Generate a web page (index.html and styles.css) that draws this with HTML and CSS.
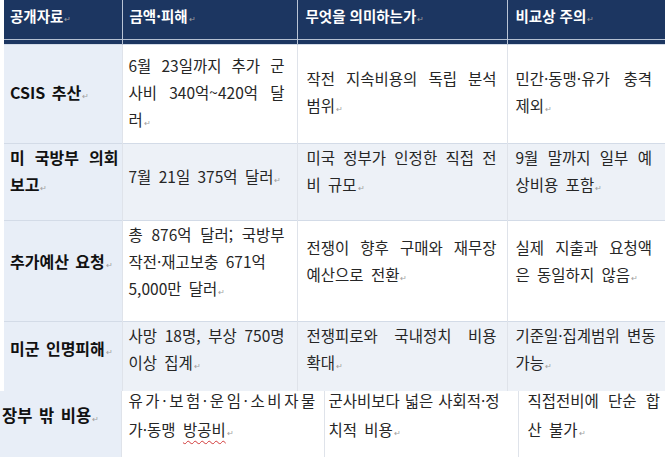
FILE: index.html
```html
<!DOCTYPE html>
<html lang="ko">
<head>
<meta charset="utf-8">
<link rel="stylesheet" href="styles.css">
</head>
<body>
<div class="page">
  <table class="grid main">
    <colgroup><col class="w1"><col class="w2"><col class="w3"><col class="w4"></colgroup>
    <thead>
      <tr>
        <th>공개자료<i class="pm">↵</i></th>
        <th>금액·피해<i class="pm">↵</i></th>
        <th>무엇을 의미하는가<i class="pm">↵</i></th>
        <th>비교상 주의<i class="pm">↵</i></th>
      </tr>
    </thead>
    <tbody>
      <tr class="r1">
        <td class="k">CSIS 추산<i class="pm">↵</i></td>
        <td class="c2"><span class="j">6월 23일까지 추가 군</span><span class="j">사비 340억~420억 달</span><span>러<i class="pm">↵</i></span></td>
        <td class="c3"><span class="j">작전 지속비용의 독립 분석</span><span>범위<i class="pm">↵</i></span></td>
        <td class="c4"><span class="j">민간·동맹·유가 충격</span><span>제외<i class="pm">↵</i></span></td>
      </tr>
      <tr class="r2 shade">
        <td class="k"><span class="j">미 국방부 의회</span><span>보고<i class="pm">↵</i></span></td>
        <td class="c2 single"><span>7월 21일 375억 달러<i class="pm">↵</i></span></td>
        <td class="c3"><span class="j">미국 정부가 인정한 직접 전</span><span>비 규모<i class="pm">↵</i></span></td>
        <td class="c4"><span class="j">9월 말까지 일부 예</span><span>상비용 포함<i class="pm">↵</i></span></td>
      </tr>
      <tr class="r3">
        <td class="k">추가예산 요청<i class="pm">↵</i></td>
        <td class="c2"><span class="j">총 876억 달러; 국방부</span><span>작전·재고보충 671억</span><span>5,000만 달러<i class="pm">↵</i></span></td>
        <td class="c3"><span class="j">전쟁이 향후 구매와 재무장</span><span>예산으로 전환<i class="pm">↵</i></span></td>
        <td class="c4"><span class="j">실제 지출과 요청액</span><span>은 동일하지 않음<i class="pm">↵</i></span></td>
      </tr>
      <tr class="r4 shade">
        <td class="k">미군 인명피해<i class="pm">↵</i></td>
        <td class="c2"><span class="j">사망 18명, 부상 750명</span><span>이상 집계<i class="pm">↵</i></span></td>
        <td class="c3"><span class="j">전쟁피로와 국내정치 비용</span><span>확대<i class="pm">↵</i></span></td>
        <td class="c4"><span class="over">기준일·집계범위 변동</span><span>가능<i class="pm">↵</i></span></td>
      </tr>
    </tbody>
  </table>
  <table class="grid extra">
    <colgroup><col class="x1"><col class="x2"><col class="x3"><col class="x4"></colgroup>
    <tbody>
      <tr class="r5">
        <td class="k">장부 밖 비용<i class="pm">↵</i></td>
        <td class="c2"><div class="lift"><span class="spread">유가·보험·운임·소비자물</span><span>가·동맹 <u class="typo">방공비</u><i class="pm">↵</i></span></div></td>
        <td class="c3"><div class="lift"><span class="j">군사비보다 넓은 사회적·정</span><span>치적 비용<i class="pm">↵</i></span></div></td>
        <td class="c4"><div class="lift"><span class="j">직접전비에 단순 합</span><span>산 불가<i class="pm">↵</i></span></div></td>
      </tr>
    </tbody>
  </table>
</div>
</body>
</html>
```

FILE: styles.css
```css
html, body {
  margin: 0;
  padding: 0;
  background: #ffffff;
}

body {
  font-family: "Noto Sans CJK KR", "Noto Sans", sans-serif;
  color: #262626;
  width: 670px;
  height: 461px;
  overflow: hidden;
}

.page {
  display: flex;
  flex-direction: column;
}

.grid {
  border-collapse: collapse;
  table-layout: fixed;
}

.main {
  margin-left: 4px;
  width: 661px;
}

.w1 { width: 118px; }
.w2 { width: 175px; }
.w3 { width: 210px; }
.w4 { width: 158px; }

.grid th {
  height: 44px;
  padding: 0 0 0 6px;
  box-sizing: border-box;
  text-align: left;
  vertical-align: top;
  line-height: 31px;
  color: #ffffff;
  font-size: 14.5px;
  font-weight: 700;
  background: linear-gradient(to bottom, #1c3661 0 39px, #b4c0d2 39px 40px, #1c3661 40px 44px);
  border-left: 1px solid #b9c4d5;
}

.grid th:first-child { border-left: none; padding-left: 6px; }
.grid th:nth-child(2) { padding-left: 7px; }
.grid th:nth-child(3), .grid th:nth-child(4) { padding-left: 8px; }

.grid td {
  font-size: 15.5px;
  line-height: 27px;
  word-spacing: 3px;
  vertical-align: middle;
  padding: 0 12px 0 6px;
  border-left: 1px solid #dfe3ea;
  border-top: 1px solid #d3dbe7;
  text-align: justify;
  box-sizing: border-box;
}

.grid td:first-child { border-left: none; }

.grid td span { display: block; }
.grid td .j { text-align-last: justify; word-spacing: 0; }
.grid td .over { white-space: nowrap; word-spacing: 3px; }

.grid .k {
  background: #e8eef7;
  color: #111111;
  font-size: 16px;
  font-weight: 700;
  padding-left: 6px;
  padding-right: 3px;
  text-align: left;
  word-spacing: 2px;
}

.grid .c3 { padding-left: 9px; padding-right: 10px; }
.grid .c4 { padding-left: 8px; padding-right: 13px; }

.shade td { background: #edf1f7; }
.shade td.k { background: #e8eef7; }

.r1 td { height: 99px; padding-bottom: 0; }
.r2 td { height: 77px; padding-bottom: 18px; }
.r2 td.single { padding-bottom: 8px; }
.r3 td { height: 98px; padding-bottom: 16px; }
.r4 td { height: 68px; padding-bottom: 12px; }

.pm {
  font-style: normal;
  font-weight: 400;
  font-size: 8px;
  color: #a0a0a0;
  margin-left: 1px;
}

.extra {
  width: 665px;
}

.x1 { width: 121px; }
.x2 { width: 203px; }
.x3 { width: 194px; }
.x4 { width: 147px; }

.extra td {
  border-top: none;
  line-height: 29px;
  height: 66px;
  padding-top: 0;
  padding-bottom: 0;
  vertical-align: top;
}

.extra .lift { margin-top: -5px; }

.extra td.k {
  padding-left: 2px;
  padding-bottom: 14px;
  font-size: 16.5px;
  word-spacing: 2px;
  vertical-align: middle;
}
.extra td.c2 { padding-left: 7px; padding-right: 2px; }
.extra td.c3 { padding-left: 4px; padding-right: 18px; }
.extra td.c4 { padding-left: 9px; padding-right: 5px; }

.extra .spread { letter-spacing: 2.6px; white-space: nowrap; }

.typo {
  text-decoration: underline wavy #d23a3a;
  text-decoration-thickness: 1px;
  text-underline-offset: 4px;
}
```
